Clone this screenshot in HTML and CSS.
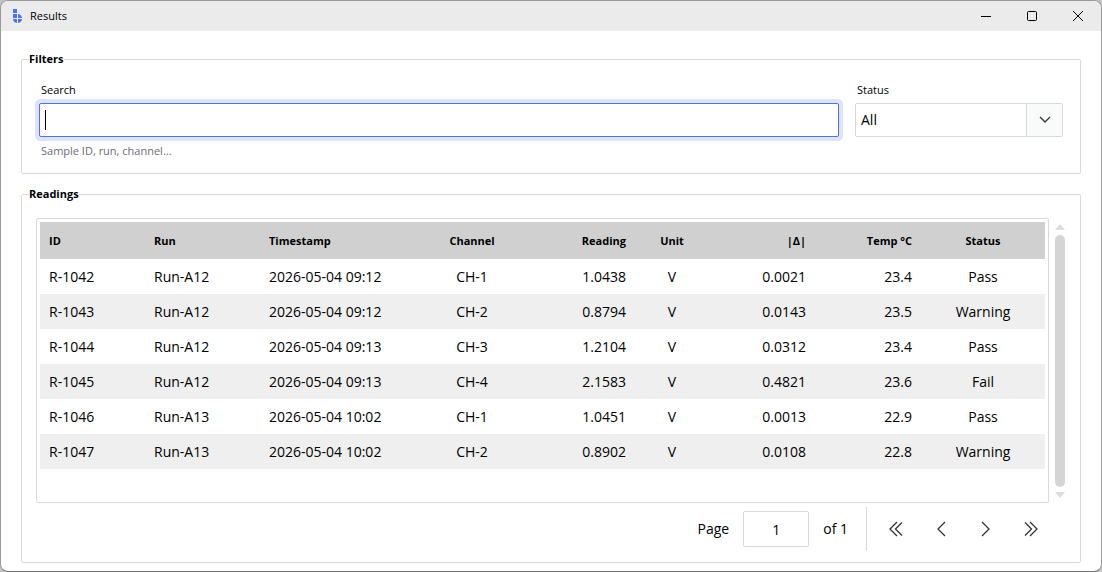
FILE: index.html
```
<!DOCTYPE html>
<html lang="en">
<head>
    <meta charset="utf-8">
    <title>Results</title>
    <link rel="stylesheet" href="styles.css">
</head>
<body>
    <div class="window">
        <header class="titlebar">
            <svg class="app-icon" width="10" height="14" viewBox="0 0 10 14" fill="#4a72f5">
                <path d="M0 0h4v4H0zM0 5h4v4H0zM5 5a4.500 4.500 0 0 1 4 4H5zM0 10h4v4A4.500 4.500 0 0 1 0 10zM5 10h4a4.500 4.500 0 0 1-4 4z"/>
            </svg>
            <h1>Results</h1>
            <div class="window-buttons">
                <button type="button" aria-label="Minimize">
                    <svg width="12" height="12" viewBox="0 0 12 12"><path d="M1 6.500h10"/></svg>
                </button>
                <button type="button" aria-label="Maximize">
                    <svg width="12" height="12" viewBox="0 0 12 12"><rect x="1.500" y="1.500" width="9" height="9" rx="1"/></svg>
                </button>
                <button type="button" aria-label="Close">
                    <svg width="12" height="12" viewBox="0 0 12 12"><path d="M1 1l10 10M11 1L1 11"/></svg>
                </button>
            </div>
        </header>

        <main class="content">
            <fieldset class="group">
                <legend>Filters</legend>
                <div class="filters">
                    <div class="field field-search">
                        <label for="search">Search</label>
                        <div class="control">
                            <input type="text" id="search" class="search-input" aria-describedby="search-hint" autocomplete="off" autofocus>
                            <span class="caret"></span>
                        </div>
                        <p class="hint" id="search-hint">Sample ID, run, channel...</p>
                    </div>
                    <div class="field field-status">
                        <label for="status">Status</label>
                        <div class="control">
                            <select id="status">
                                <option>All</option>
                                <option>Pass</option>
                                <option>Warning</option>
                                <option>Fail</option>
                            </select>
                            <span class="select-arrow">
                                <svg width="12" height="8" viewBox="0 0 12 8"><path d="M1 1l5 5 5-5"/></svg>
                            </span>
                        </div>
                    </div>
                </div>
            </fieldset>

            <fieldset class="group group-readings">
                <legend>Readings</legend>
                <div class="readings">
                    <div class="table-area">
                        <div class="table-frame">
                            <table>
                                <colgroup>
                                    <col class="col-id">
                                    <col class="col-run">
                                    <col class="col-time">
                                    <col class="col-channel">
                                    <col class="col-reading">
                                    <col class="col-unit">
                                    <col class="col-delta">
                                    <col class="col-temp">
                                    <col class="col-status">
                                </colgroup>
                                <thead>
                                    <tr>
                                        <th>ID</th>
                                        <th>Run</th>
                                        <th>Timestamp</th>
                                        <th class="center">Channel</th>
                                        <th class="right">Reading</th>
                                        <th class="center">Unit</th>
                                        <th class="right">|Δ|</th>
                                        <th class="right">Temp °C</th>
                                        <th class="center">Status</th>
                                    </tr>
                                </thead>
                                <tbody>
                                    <tr>
                                        <td>R-1042</td><td>Run-A12</td><td>2026-05-04 09:12</td>
                                        <td class="center">CH-1</td><td class="right">1.0438</td><td class="center">V</td>
                                        <td class="right">0.0021</td><td class="right">23.4</td><td class="center">Pass</td>
                                    </tr>
                                    <tr>
                                        <td>R-1043</td><td>Run-A12</td><td>2026-05-04 09:12</td>
                                        <td class="center">CH-2</td><td class="right">0.8794</td><td class="center">V</td>
                                        <td class="right">0.0143</td><td class="right">23.5</td><td class="center">Warning</td>
                                    </tr>
                                    <tr>
                                        <td>R-1044</td><td>Run-A12</td><td>2026-05-04 09:13</td>
                                        <td class="center">CH-3</td><td class="right">1.2104</td><td class="center">V</td>
                                        <td class="right">0.0312</td><td class="right">23.4</td><td class="center">Pass</td>
                                    </tr>
                                    <tr>
                                        <td>R-1045</td><td>Run-A12</td><td>2026-05-04 09:13</td>
                                        <td class="center">CH-4</td><td class="right">2.1583</td><td class="center">V</td>
                                        <td class="right">0.4821</td><td class="right">23.6</td><td class="center">Fail</td>
                                    </tr>
                                    <tr>
                                        <td>R-1046</td><td>Run-A13</td><td>2026-05-04 10:02</td>
                                        <td class="center">CH-1</td><td class="right">1.0451</td><td class="center">V</td>
                                        <td class="right">0.0013</td><td class="right">22.9</td><td class="center">Pass</td>
                                    </tr>
                                    <tr>
                                        <td>R-1047</td><td>Run-A13</td><td>2026-05-04 10:02</td>
                                        <td class="center">CH-2</td><td class="right">0.8902</td><td class="center">V</td>
                                        <td class="right">0.0108</td><td class="right">22.8</td><td class="center">Warning</td>
                                    </tr>
                                </tbody>
                            </table>
                        </div>
                        <div class="scrollbar">
                            <svg width="10" height="6" viewBox="0 0 10 6"><path d="M5 0l5 6H0z"/></svg>
                            <div class="thumb"></div>
                            <svg width="10" height="6" viewBox="0 0 10 6"><path d="M0 0h10L5 6z"/></svg>
                        </div>
                    </div>

                    <nav class="pager">
                        <label for="page">Page</label>
                        <input type="text" id="page" value="1">
                        <span class="page-total">of 1</span>
                        <div class="pager-buttons">
                            <button type="button" aria-label="First page">
                                <svg width="16" height="16" viewBox="0 0 16 16"><path d="M9 1L2 8l7 7M14 1.500L7.500 8l6.500 6.500"/></svg>
                            </button>
                            <button type="button" aria-label="Previous page">
                                <svg width="16" height="16" viewBox="0 0 16 16"><path d="M12 1L5 8l7 7"/></svg>
                            </button>
                            <button type="button" aria-label="Next page">
                                <svg width="16" height="16" viewBox="0 0 16 16"><path d="M4 1l7 7-7 7"/></svg>
                            </button>
                            <button type="button" aria-label="Last page">
                                <svg width="16" height="16" viewBox="0 0 16 16"><path d="M7 1l7 7-7 7M2 1.500L8.500 8 2 14.500"/></svg>
                            </button>
                        </div>
                    </nav>
                </div>
            </fieldset>
        </main>
    </div>
</body>
</html>
```
FILE: styles.css
```
* { box-sizing: border-box; }
body {
    margin: 0;
    background-color: #c4c4c4;
    color: #000;
    font-family: "Open Sans", "Noto Sans", sans-serif;
    font-size: 14px;
    line-height: 20px;
}
button, input, select { font: inherit; color: inherit; }
button { padding: 0; border: none; background: none; }
svg { display: block; }

.window {
    min-height: 100vh;
    display: flex;
    flex-direction: column;
    background-color: #fff;
    border: 1px solid #999;
    border-bottom-color: #747474;
    border-radius: 8px;
    overflow: hidden;
}

/* Title bar */
.titlebar {
    display: flex;
    align-items: center;
    height: 30px;
    padding-left: 12px;
    background-color: #ebebeb;
}
.titlebar h1 { margin: 0 0 0 7px; font-size: 11px; font-weight: normal; }
.window-buttons { display: flex; margin-left: auto; }
.window-buttons button {
    width: 46px;
    height: 30px;
    display: flex;
    align-items: center;
    justify-content: center;
}
.window-buttons svg { fill: none; stroke: #000; }

/* Groups */
.content {
    flex: 1;
    display: flex;
    flex-direction: column;
    gap: 12px;
    padding: 20px 20px 8px;
}
.group {
    min-width: 0;
    margin: 0;
    padding: 0;
    border: 1px solid #d9d9d9;
    border-radius: 2px;
}
.group legend {
    margin-left: 7px;
    padding: 0;
    font-size: 11px;
    font-weight: bold;
    line-height: 16px;
}

/* Filters */
.filters { display: flex; gap: 16px; padding: 14px 17px 13px; }
.field label { display: block; padding-left: 2px; font-size: 11px; line-height: 18px; margin-bottom: 4px; }
.field-search { flex: 1; }
.field-status { width: 208px; }
.control { position: relative; }
.search-input, select {
    display: block;
    width: 100%;
    height: 34px;
    padding: 0 5px;
    border: 1px solid #d9d9d9;
    border-radius: 2px;
    background-color: #fff;
    outline: none;
    appearance: none;
}
.search-input {
    border-color: #4a72f5;
    box-shadow: 0 0 0 4px #dbe3fd;
    caret-color: transparent;
}
.caret { position: absolute; left: 6px; top: 7px; width: 1px; height: 20px; background-color: #000; }
.select-arrow {
    position: absolute;
    top: 1px;
    right: 1px;
    bottom: 1px;
    width: 36px;
    display: flex;
    align-items: center;
    justify-content: center;
    border-left: 1px solid #d9d9d9;
    background-color: #f9fbfb;
    pointer-events: none;
}
.select-arrow svg { fill: none; stroke: #333; stroke-width: 1.3; }
.hint { margin: 5px 0 0 2px; font-size: 11px; line-height: 18px; color: #6c6c74; }

/* Readings */
.group-readings { flex: 1; }
.readings { padding: 16px 14px 11px; }
.table-area { display: flex; gap: 6px; }
.table-frame { flex: 1; min-height: 285px; padding: 3px; border: 1px solid #d9d9d9; border-radius: 2px; }
table { width: 100%; table-layout: fixed; border-collapse: collapse; }
.col-id { width: 105px; }
.col-run { width: 115px; }
.col-time { width: 165px; }
.col-channel { width: 94px; }
.col-reading { width: 116px; }
.col-unit { width: 74px; }
.col-delta { width: 106px; }
.col-temp { width: 106px; }
th, td { padding: 0 9px; text-align: left; white-space: nowrap; }
th { height: 37px; background-color: #d0d0d0; font-size: 11px; }
td { height: 35px; }
tbody tr:nth-child(even) { background-color: #efefef; }
.center { text-align: center; }
.right { text-align: right; }

.scrollbar { width: 10px; margin-right: 1px; padding: 6px 0 5px; display: flex; flex-direction: column; gap: 5px; }
.scrollbar svg { fill: #dcdcdc; }
.thumb { flex: 1; border-radius: 5px; background-color: #d5d5d5; }

/* Pager */
.pager { display: flex; align-items: center; justify-content: flex-end; margin-top: 4px; padding-right: 13px; }
.pager input {
    width: 66px;
    height: 36px;
    margin: 0 14px;
    padding: 0;
    border: 1px solid #d9d9d9;
    border-radius: 2px;
    text-align: center;
}
.pager-buttons { display: flex; margin-left: 18px; padding-left: 6px; border-left: 1px solid #d9d9d9; }
.pager-buttons button {
    width: 45px;
    height: 44px;
    display: flex;
    align-items: center;
    justify-content: center;
}
.pager-buttons svg { fill: none; stroke: #333; stroke-width: 1.3; }
```
